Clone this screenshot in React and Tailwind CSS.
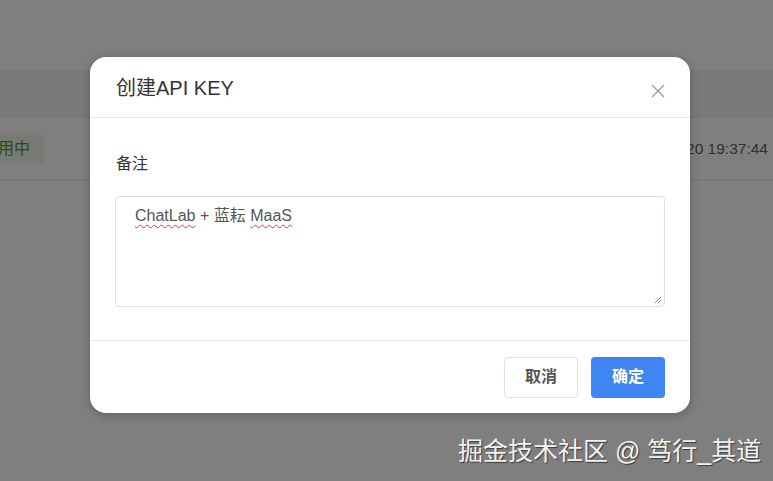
import React from 'react';

const cjk = { fontFamily: '"Liberation Sans", "Noto Sans CJK SC", sans-serif' };

const CloseIcon = () => (
    <svg width="14" height="14" viewBox="0 0 14 14" fill="none">
        <path d="M1 1L13 13M13 1L1 13" stroke="#9a9a9a" strokeWidth="1.3" />
    </svg>
);

const Grip = () => (
    <svg width="9" height="9" viewBox="0 0 9 9" className="absolute right-[2px] bottom-[2px]">
        <path d="M8 2L2 8M8 5L5 8" stroke="#8a8a8a" strokeWidth="1" />
    </svg>
);

const App = () => {
    return (
        <div className="relative w-[773px] h-[481px] overflow-hidden bg-white" style={cjk}>
            {/* page behind the dialog */}
            <div className="pt-[70px]">
                <div className="h-[48px] bg-[#f4f5f8] border-t border-[#ebeef5]"></div>
                <div className="relative h-[63px] border-b border-[#e6e8ec] flex items-center">
                    <span className="ml-[-30px] h-[28px] pl-[12px] pr-[14px] flex items-center bg-[#eef7e8] text-[#4f9a2c] text-[16px] rounded">
                        启用中
                    </span>
                    <span className="absolute left-[624px] text-[15.5px] text-[#5e5e5e] whitespace-nowrap">
                        2024-03-20 19:37:44
                    </span>
                </div>
            </div>

            {/* overlay */}
            <div className="absolute inset-0 bg-black/50">
                <div className="ml-[90px] mt-[57px] w-[600px] bg-white rounded-[16px] shadow-[0_2px_10px_rgba(0,0,0,0.25)]">
                    <div className="h-[61px] px-[26px] flex items-center justify-between border-b border-[#e8e8e8]">
                        <h2 className="text-[20px] text-[#333] pt-[2px]">创建API KEY</h2>
                        <button className="mr-[-1px] mt-[8px]"><CloseIcon /></button>
                    </div>

                    <div className="px-[25px] pt-[35px] pb-[33px] border-b border-[#ececec]">
                        <label className="block text-[16px] leading-[22px] text-[#333] ml-[1px]">备注</label>
                        <div className="relative mt-[21px] h-[111px] border border-[#dcdfe6] rounded-[4px] px-[19px] pt-[8px]">
                            <p className="text-[16px] text-[#555] leading-[22px]">
                                <span className="underline decoration-wavy decoration-[#e53935] decoration-1 underline-offset-[3px]">ChatLab</span>
                                {' + 蓝耘 '}
                                <span className="underline decoration-wavy decoration-[#e53935] decoration-1 underline-offset-[3px]">MaaS</span>
                            </p>
                            <Grip />
                        </div>
                    </div>

                    <div className="h-[72px] px-[25px] flex items-center justify-end gap-[13px]">
                        <button className="w-[74px] h-[41px] border border-[#dcdfe6] rounded-[4px] bg-white text-[16px] font-bold text-[#555]">
                            取消
                        </button>
                        <button className="w-[74px] h-[41px] rounded-[4px] bg-[#3f85f3] text-[16px] font-bold text-white">
                            确定
                        </button>
                    </div>
                </div>
            </div>

            {/* watermark */}
            <div className="absolute left-[458px] top-[433px] text-[25px] text-[#f2f2f2] whitespace-nowrap [text-shadow:1px_1px_1px_rgba(0,0,0,0.55)]">
                掘金技术社区 @ 笃行_其道
            </div>
        </div>
    );
};

export default App;
